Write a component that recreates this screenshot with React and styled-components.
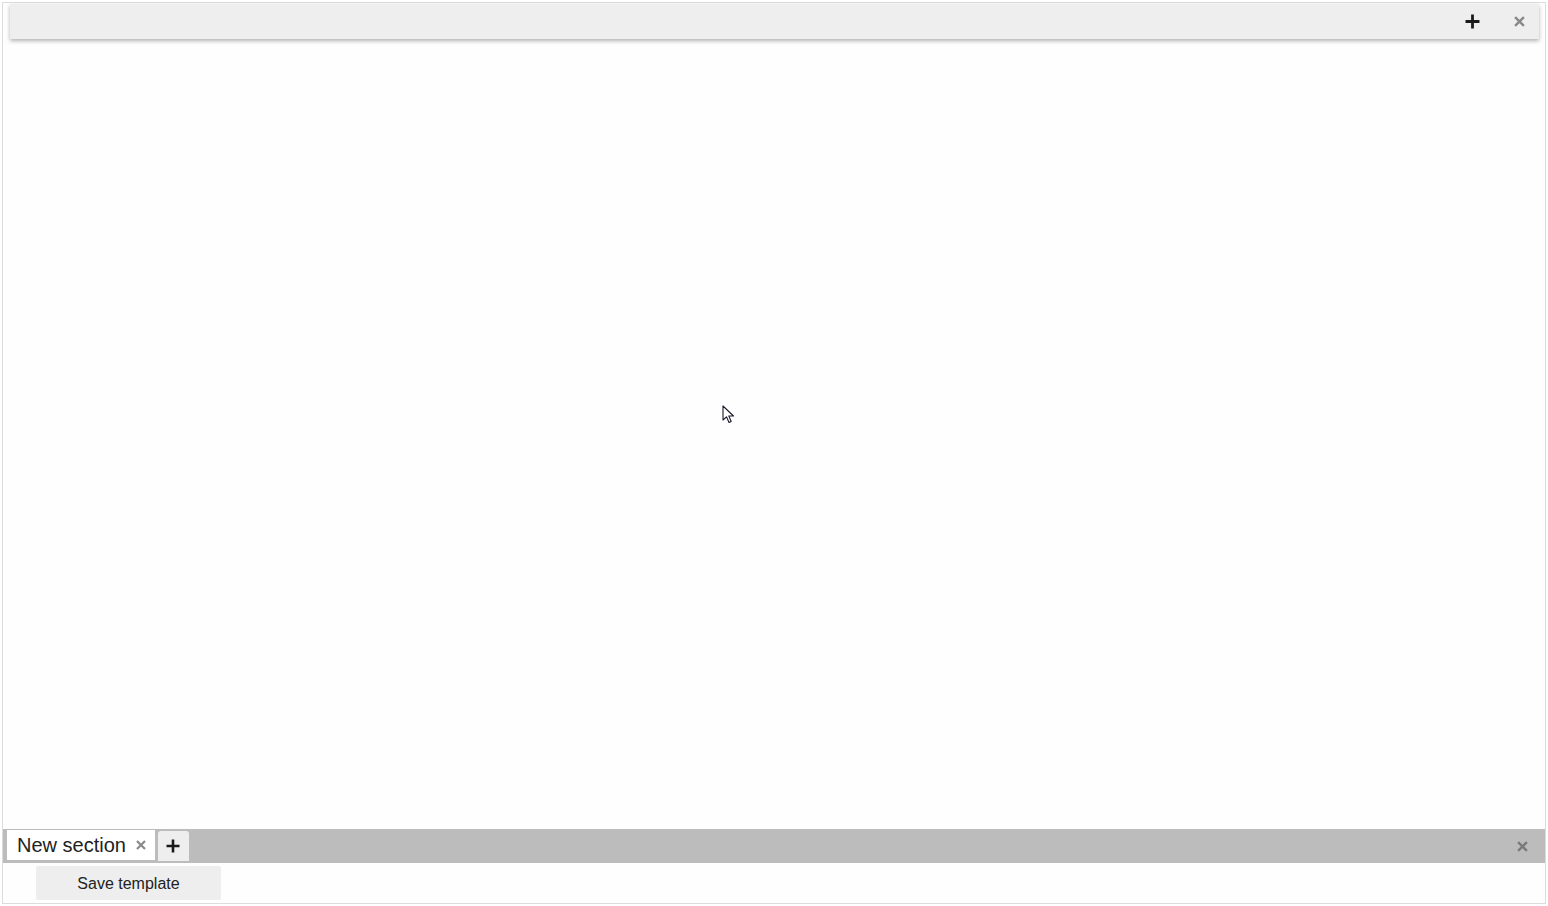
import React from 'react'
import styled, { createGlobalStyle } from 'styled-components'

const Global = createGlobalStyle`
  html, body {
    margin: 0;
    padding: 0;
    background: #fff;
    font-family: "Liberation Sans", Arial, sans-serif;
  }
`

const Frame = styled.div`
  position: relative;
  margin: 2px 2px 0 2px;
  height: 900px;
  border: 1px solid #dcdcdc;
  display: flex;
  flex-direction: column;
  background: #fefefe;
`

const TopBar = styled.div`
  margin: 1px 6px 0 7px;
  height: 35px;
  background: #eeeeee;
  box-shadow: 0 2px 4px rgba(0, 0, 0, 0.3);
  display: flex;
  align-items: center;
  justify-content: flex-end;
  padding-right: 12px;
  gap: 31px;
`

const IconButton = styled.button`
  border: 0;
  background: transparent;
  padding: 0;
  display: flex;
  align-items: center;
  justify-content: center;
  width: ${p => p.size || 16}px;
  height: ${p => p.size || 16}px;
  cursor: pointer;
`

const Canvas = styled.div`
  flex: 1;
`

const TabBar = styled.div`
  height: 34px;
  background: #bcbcbc;
  display: flex;
  align-items: flex-start;
  padding: 1px 15px 0 4px;
  box-sizing: border-box;
`

const Tab = styled.div`
  height: 30px;
  background: #fff;
  display: flex;
  align-items: center;
  padding: 0 9px 0 10px;
  gap: 10px;
  font-size: 20px;
  color: #222;
`

const AddTab = styled.button`
  margin: 1px 0 0 3px;
  width: 31px;
  height: 30px;
  border: 0;
  border-radius: 3px 3px 0 0;
  background: #eeeeee;
  display: flex;
  align-items: center;
  justify-content: center;
  padding: 0;
`

const Spacer = styled.div`
  flex: 1;
`

const BarClose = styled(IconButton)`
  align-self: center;
`

const Footer = styled.div`
  height: 40px;
  display: flex;
  align-items: flex-start;
  padding: 3px 0 0 33px;
  box-sizing: border-box;
`

const SaveButton = styled.button`
  width: 185px;
  height: 34px;
  border: 0;
  border-radius: 2px;
  background: #eeeeee;
  font-family: "Liberation Sans", Arial, sans-serif;
  font-size: 16px;
  color: #222;
  padding-top: 2px;
`

const Pointer = styled.svg`
  position: absolute;
  left: 719px;
  top: 402px;
`

const Plus = ({ size = 14, width = 2.6, color = '#1a1a1a' }) => (
  <svg width={size} height={size} viewBox="0 0 14 14">
    <path d="M7 0.5V13.5M0.5 7H13.5" stroke={color} strokeWidth={width} />
  </svg>
)

const Cross = ({ size = 10, color = '#888' }) => (
  <svg width={size} height={size} viewBox="0 0 10 10">
    <path d="M1 1L9 9M9 1L1 9" stroke={color} strokeWidth="2.2" />
  </svg>
)

const App = () => (
  <>
    <Global />
    <Frame>
      <TopBar>
        <IconButton>
          <Plus size={15} />
        </IconButton>
        <IconButton>
          <Cross size={11} />
        </IconButton>
      </TopBar>

      <Canvas />

      <TabBar>
        <Tab>
          New section
          <Cross size={10} color="#8a8a8a" />
        </Tab>
        <AddTab>
          <Plus size={14} />
        </AddTab>
        <Spacer />
        <BarClose>
          <Cross size={11} color="#7a7a7a" />
        </BarClose>
      </TabBar>

      <Footer>
        <SaveButton>Save template</SaveButton>
      </Footer>

      <Pointer width="14" height="20" viewBox="0 0 14 20">
        <path
          d="M1 1V15L4.5 11.8L7 17.5L9.2 16.5L6.8 11H11.5Z"
          fill="#fff"
          stroke="#1b1b2e"
          strokeWidth="1.1"
          strokeLinejoin="round"
        />
      </Pointer>
    </Frame>
  </>
)

export default App
